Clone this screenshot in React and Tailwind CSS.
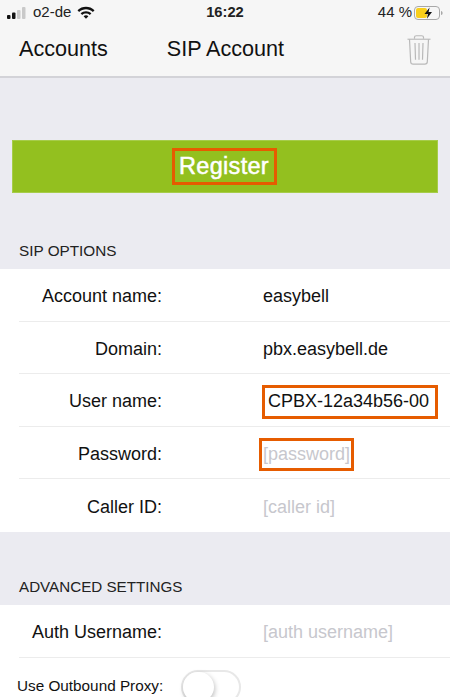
import React from "react";

const font = { fontFamily: '"Liberation Sans", Arial, sans-serif' };

const Row = ({ label, children, last }) => (
  <div className={`ml-[19px] h-[52.5px] pt-[3.5px] flex items-center ${last ? "" : "border-b border-[#ececec]"}`}>
    <span className="w-[143px] text-right text-[18px] text-[#111]">{label}</span>
    <div className="ml-[101px] text-[18px] text-[#111]">{children}</div>
  </div>
);

const Placeholder = ({ children }) => <span className="text-[#c7c7cd]">{children}</span>;

const Signal = () => (
  <svg width="20" height="12" viewBox="0 0 20 12">
    <rect x="0" y="8" width="3.5" height="4" rx="1" fill="#111" />
    <rect x="5" y="5.5" width="3.5" height="6.5" rx="1" fill="#111" />
    <rect x="10" y="3" width="3.5" height="9" rx="1" fill="#c9c9c9" />
    <rect x="15" y="0" width="3.5" height="12" rx="1" fill="#c9c9c9" />
  </svg>
);

const Wifi = () => (
  <svg width="18" height="13" viewBox="0 0 18 13">
    <path d="M0.5 4.2C5.2-.4 12.8-.4 17.5 4.2L15.9 5.9C12 2.2 6 2.2 2.1 5.9Z" fill="#111" />
    <path d="M3.6 7.3C6.6 4.5 11.4 4.5 14.4 7.3L12.8 8.9C10.6 7 7.4 7 5.2 8.9Z" fill="#111" />
    <path d="M6.6 10.2C8 9 10 9 11.4 10.2L9 12.8Z" fill="#111" />
  </svg>
);

const Battery = () => (
  <svg width="29" height="14" viewBox="0 0 29 14">
    <rect x="0.5" y="0.5" width="25" height="13" rx="3.5" fill="none" stroke="#a8a8a8" />
    <rect x="2" y="2" width="11" height="10" rx="2" fill="#f9cf1b" />
    <path d="M27 5v4c1 0 1.6-1 1.6-2S28 5 27 5Z" fill="#a8a8a8" />
    <path d="M15.6 1.5L10.5 8h3.4l-1 4.8L18 6h-3.4Z" fill="#111" />
  </svg>
);

const Trash = () => (
  <svg width="24" height="30" viewBox="0 0 24 32" fill="none" stroke="#b9b9b9" strokeWidth="1.2" preserveAspectRatio="none">
    <path d="M0.5 4.5h23" />
    <path d="M7.5 4V2.5C7.5 1.3 8.3.8 9.3.8h5.4c1 0 1.8.5 1.8 1.7V4" />
    <path d="M2.5 4.5l1.2 24.2c.1 1.5 1 2.3 2.4 2.3h11.8c1.4 0 2.3-.8 2.4-2.3l1.2-24.2" />
    <path d="M8 8.5l.5 18M12 8.5v18M16 8.5l-.5 18" />
  </svg>
);

const App = () => {
  return (
    <div className="w-[450px] h-[697px] overflow-hidden bg-[#ebebf1]" style={font}>
      {/* Status bar + nav */}
      <div className="h-[78px] bg-[#f6f6f6] border-b-2 border-[#d3d3d8]">
        <div className="h-[25px] flex items-center pl-[7px] pr-[7px] text-[15px] relative">
          <Signal />
          <span className="ml-[6px] text-[#222]">o2-de</span>
          <span className="ml-[6px]"><Wifi /></span>
          <span className="flex-1" />
          <span className="text-[#222]">44 %</span>
          <span className="ml-[2px]"><Battery /></span>
          <span className="absolute left-0 right-0 text-center font-bold text-[14.7px] text-[#222]">16:22</span>
        </div>
        <div className="h-[51px] pb-[2px] flex items-center pl-[19px] pr-[19px] text-[21.6px] text-[#111]">
          <span>Accounts</span>
          <span className="ml-[59px]">SIP Account</span>
          <span className="ml-auto"><Trash /></span>
        </div>
      </div>

      {/* Register button */}
      <div className="mt-[62px] mx-[12px] h-[53px] bg-[#93c01f] border border-[#a6cc4a] flex items-center justify-center">
        <span className="mr-[2px] border-[3px] border-[#e65c00] h-[37px] w-[105px] pt-[1px] flex items-center justify-center text-white text-[23.5px] tracking-[0.3px] [-webkit-text-stroke:0.5px_white]">
          Register
        </span>
      </div>

      <div className="h-[76px] pl-[19px] flex items-end pb-[6.5px] text-[15.3px] text-[#222]">SIP OPTIONS</div>

      <div className="bg-white">
        <Row label="Account name:">easybell</Row>
        <Row label="Domain:">pbx.easybell.de</Row>
        <Row label="User name:">
          <span className="-ml-[1px] flex items-center border-[3px] border-[#e65c00] h-[34px] w-[176px] pl-[3px]">CPBX-12a34b56-00</span>
        </Row>
        <Row label="Password:">
          <span className="-ml-[4px] flex items-center border-[3px] border-[#e65c00] h-[33px] w-[95px] pl-[1px]">
            <Placeholder>[password]</Placeholder>
          </span>
        </Row>
        <Row label="Caller ID:" last><Placeholder>[caller id]</Placeholder></Row>
      </div>

      <div className="h-[73.5px] pl-[19px] flex items-end pb-[6.5px] text-[15.2px] text-[#222]">ADVANCED SETTINGS</div>

      <div className="bg-white h-[200px]">
        <Row label="Auth Username:"><Placeholder>[auth username]</Placeholder></Row>
        <div className="flex items-center h-[59px] pl-[17px]">
          <span className="-mt-[2px] text-[15.3px] text-[#111]">Use Outbound Proxy:</span>
          <span className="ml-[18px] relative block w-[60px] h-[34px] rounded-full border-2 border-[#e8e8e8] bg-white">
            <span className="absolute left-0 top-0 w-[31px] h-[30px] rounded-full bg-white shadow-[1px_2px_5px_rgba(0,0,0,0.25)]" />
          </span>
        </div>
      </div>
    </div>
  );
};

export default App;
